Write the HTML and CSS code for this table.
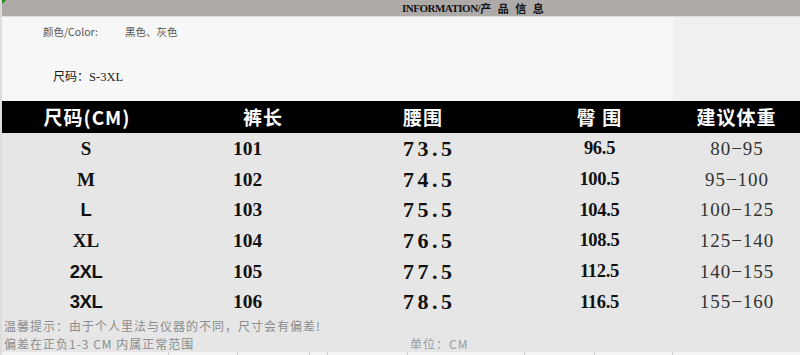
FILE: index.html
```html
<!DOCTYPE html>
<html lang="zh">
<head>
<meta charset="utf-8">
<title>INFORMATION</title>
<link rel="stylesheet" href="styles.css">
</head>
<body>
<div class="page">
  <div class="marker"></div>
  <div class="topbar"><span class="title"><span class="title-en">INFORMATION/</span><span class="title-cn">产 品 信 息</span></span></div>
  <div class="info">
    <div class="info-main">
      <div class="color-row"><span class="lbl">颜色/Color:</span><span>黑色、灰色</span></div>
      <div class="size-row"><span class="cn">尺码：</span><span class="en">S-3XL</span></div>
    </div>
    <div class="info-side"></div>
  </div>
  <div class="table">
    <div class="th c1">尺码(CM)</div>
    <div class="th c2">裤长</div>
    <div class="th c3">腰围</div>
    <div class="th c4">臀 围</div>
    <div class="th c5">建议体重</div>

    <div class="td c1 serif">S</div><div class="td c2">101</div><div class="td c3">73.5</div><div class="td c4">96.5</div><div class="td c5">80−95</div>
    <div class="td c1 serif">M</div><div class="td c2">102</div><div class="td c3">74.5</div><div class="td c4">100.5</div><div class="td c5">95−100</div>
    <div class="td c1 sans">L</div><div class="td c2">103</div><div class="td c3">75.5</div><div class="td c4">104.5</div><div class="td c5">100−125</div>
    <div class="td c1 serif">XL</div><div class="td c2">104</div><div class="td c3">76.5</div><div class="td c4">108.5</div><div class="td c5">125−140</div>
    <div class="td c1 sans">2XL</div><div class="td c2">105</div><div class="td c3">77.5</div><div class="td c4">112.5</div><div class="td c5">140−155</div>
    <div class="td c1 sans">3XL</div><div class="td c2">106</div><div class="td c3">78.5</div><div class="td c4">116.5</div><div class="td c5">155−160</div>
  </div>
  <div class="foot">
    <div class="foot-line">温馨提示：由于个人里法与仪器的不同，尺寸会有偏差!</div>
    <div class="foot-line foot-split"><span>偏差在正负1-3 CM 内属正常范围</span><span class="unit">单位：CM</span></div>
  </div>
  <div class="strip">
    <span class="cell w1"></span><span class="cell w2"></span><span class="cell w3"></span><span class="cell w4"></span><span class="cell w5"></span><span class="cell w6"></span><span class="cell w7"></span><span class="cell w8"></span><span class="cell w9"></span>
  </div>
</div>
</body>
</html>
```

FILE: styles.css
```css
html, body {
  margin: 0;
  padding: 0;
  background: #e6e6e6;
}

.page {
  position: relative;
  width: 800px;
  height: 355px;
  overflow: hidden;
  box-sizing: border-box;
  border-left: 2px solid #dcdcdc;
  background: #e6e6e6;
  font-family: "Noto Sans CJK SC", sans-serif;
}

.marker {
  position: absolute;
  left: 0;
  top: 0;
  width: 0;
  height: 0;
  border-top: 4px solid #1e8a1e;
  border-right: 4px solid transparent;
}

.topbar {
  height: 16px;
  background: #aeaaa8;
  border-bottom: 1px solid #dedede;
  padding-left: 400px;
  display: flex;
  align-items: center;
  color: #111;
}

.title {
  display: flex;
  align-items: center;
  line-height: 14px;
  white-space: pre;
}

.title-en {
  font-family: "Liberation Serif", serif;
  font-weight: bold;
  font-size: 11px;
  letter-spacing: -0.5px;
}

.title-cn {
  font-family: "Noto Sans CJK SC", sans-serif;
  font-weight: bold;
  font-size: 11px;
  word-spacing: 4px;
}

.info {
  height: 84px;
  display: flex;
}

.info-main {
  width: 671px;
  background: #f7f7f7;
  padding: 8px 0 0 41px;
  box-sizing: border-box;
}

.info-side {
  flex: 1;
  background: #f0f0f0;
}

.color-row {
  display: flex;
  font-size: 10.5px;
  line-height: 14px;
  color: #555;
}

.color-row .lbl {
  width: 82px;
}

.size-row {
  margin-top: 29px;
  padding-left: 10px;
  display: flex;
  align-items: baseline;
  line-height: 16px;
  color: #1a1a1a;
}

.size-row .cn {
  font-size: 12px;
}

.size-row .en {
  font-family: "Liberation Serif", serif;
  font-size: 12.5px;
}

.table {
  display: grid;
  grid-template-columns: 168px 180px 176px 147px 127px;
  grid-template-rows: 32px 31px 31px 30px 31px 31px 30px;
}

.th {
  background: #000;
  color: #fff;
  font-family: "Noto Sans CJK SC", sans-serif;
  font-weight: bold;
  font-size: 19px;
  letter-spacing: 1px;
  display: flex;
  align-items: center;
  justify-content: center;
  white-space: pre;
  line-height: 32px;
}

.th.c1 { padding-left: 2px; }
.th.c2 { padding-left: 6px; }
.th.c3 { justify-content: flex-start; padding-left: 53px; }

.td {
  display: flex;
  align-items: center;
  justify-content: center;
  color: #111;
  font-family: "Liberation Serif", serif;
  font-weight: bold;
  font-size: 19px;
  white-space: pre;
}

.td.c1.serif { font-family: "Liberation Serif", serif; }
.td.c1.sans {
  font-family: "Liberation Sans", sans-serif;
  font-size: 18.5px;
  letter-spacing: -0.5px;
}

.td.c2 {
  justify-content: flex-start;
  padding-left: 63px;
  font-size: 19.5px;
}

.td.c3 {
  justify-content: flex-start;
  padding-left: 53px;
  font-size: 22px;
  letter-spacing: 3.5px;
}

.td.c4 {
  font-size: 18.5px;
  letter-spacing: -0.3px;
}

.td.c5 {
  font-weight: normal;
  color: #333;
  font-size: 19px;
  letter-spacing: 1px;
  padding-left: 1px;
}

.foot {
  height: 35px;
  padding: 0 0 0 2px;
  box-sizing: border-box;
  color: #8c8c8c;
  font-size: 12px;
  letter-spacing: 1px;
}

.foot-line {
  line-height: 17.5px;
  white-space: pre;
}

.foot-split {
  display: grid;
  grid-template-columns: 406px 1fr;
}

.foot-split .unit {
  color: #9c9c9c;
}

.strip {
  height: 3px;
  background: #f4f4f4;
  display: flex;
}

.strip .cell {
  height: 3px;
  border-right: 1px solid #cfcfcf;
  box-sizing: border-box;
}

.strip .w1 { width: 167px; }
.strip .w2 { width: 69px; }
.strip .w3 { width: 72px; }
.strip .w4 { width: 18px; }
.strip .w5 { width: 80px; }
.strip .w6 { width: 117px; }
.strip .w7 { width: 70px; }
.strip .w8 { width: 78px; }
.strip .w9 { flex: 1; border-right: none; }
```
